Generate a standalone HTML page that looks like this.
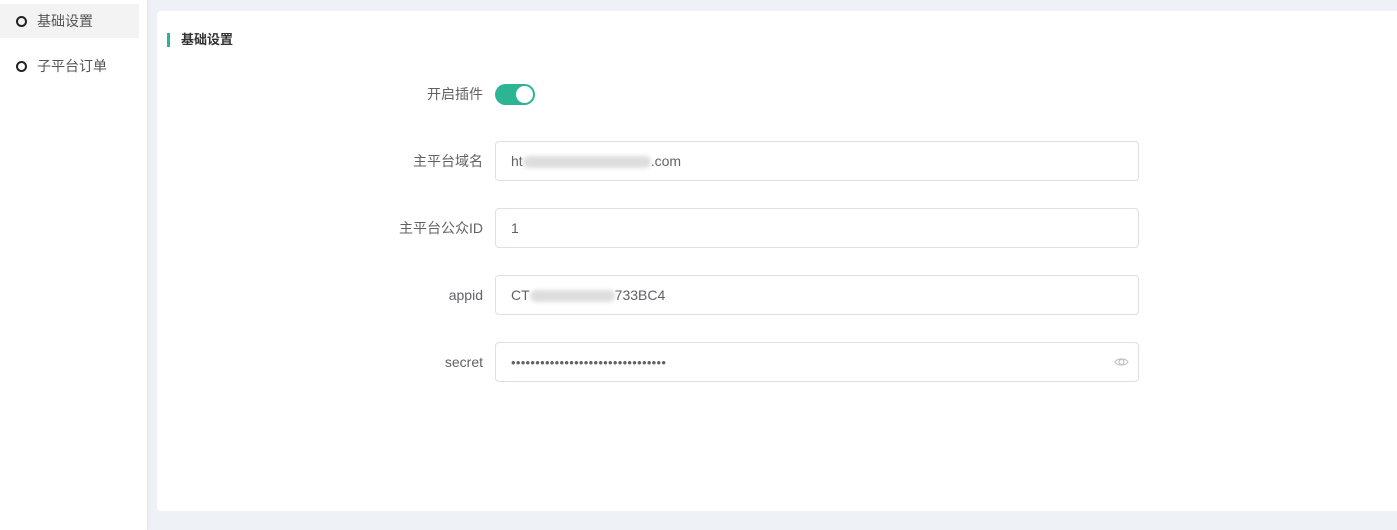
<!DOCTYPE html>
<html><head><meta charset="utf-8"><style>
*{margin:0;padding:0;box-sizing:border-box}
body{width:1397px;height:530px;background:#eef1f5;font-family:"Liberation Sans","Noto Sans CJK SC",sans-serif;position:relative;overflow:hidden;color:#606266}
.side{position:absolute;left:0;top:0;width:147px;height:530px;background:#fff;box-shadow:1px 0 3px rgba(0,0,0,.06)}
.item{position:absolute;left:0;width:139px;height:34px;font-size:14px;color:#555;line-height:34px;padding-left:37px}
.item .c{position:absolute;left:16px;top:12px;width:11px;height:11px;border:2px solid #222;border-radius:50%}
.card{position:absolute;left:157px;top:11px;right:0;height:500px;background:#fff;border-radius:4px 0 0 4px}
.title{position:absolute;left:10px;top:21px;font-size:13px;font-weight:bold;color:#303133;padding-left:14px;line-height:16px}
.title:before{content:"";position:absolute;left:0;top:1px;width:3px;height:14px;background:#2bb592}
.lbl{position:absolute;right:914px;font-size:14px;color:#606266;text-align:right;width:200px;line-height:20px}
.inp{position:absolute;left:338px;width:644px;height:40px;border:1px solid #dcdfe6;border-radius:4px;font-size:14px;color:#606266;line-height:38px;padding-left:15px}
.blur{display:inline-block;height:12px;background:#ddd;vertical-align:middle;filter:blur(2px);border-radius:6px}
.tog{position:absolute;left:338px;top:73px;width:40px;height:21px;background:#2bb592;border-radius:11px}
.tog:after{content:"";position:absolute;right:2px;top:2px;width:17px;height:17px;border-radius:50%;background:#fff}
</style></head><body>
<div class="side">
<div class="item" style="top:4px;background:#f3f3f3"><span class="c"></span>基础设置</div>
<div class="item" style="top:49px"><span class="c"></span>子平台订单</div>
</div>
<div class="card">
<div class="title">基础设置</div>
<div class="lbl" style="top:73px">开启插件</div>
<div class="tog"></div>
<div class="lbl" style="top:140px">主平台域名</div>
<div class="inp" style="top:130px">ht<span class="blur" style="width:128px"></span>.com</div>
<div class="lbl" style="top:207px">主平台公众ID</div>
<div class="inp" style="top:197px">1</div>
<div class="lbl" style="top:274px">appid</div>
<div class="inp" style="top:264px">CT<span class="blur" style="width:85px"></span>733BC4</div>
<div class="lbl" style="top:341px">secret</div>
<div class="inp" style="top:331px"><span style="letter-spacing:0.3px;font-size:13px">••••••••••••••••••••••••••••••••</span>
<svg style="position:absolute;right:9px;top:13px" width="15" height="12" viewBox="0 0 15 12"><path d="M1 6C3 2 12 2 14 6C12 10 3 10 1 6Z" fill="none" stroke="#c0c4cc" stroke-width="1.2"/><circle cx="7.5" cy="6" r="2.5" fill="none" stroke="#c0c4cc" stroke-width="1.2"/></svg></div>
</div>
</body></html>
